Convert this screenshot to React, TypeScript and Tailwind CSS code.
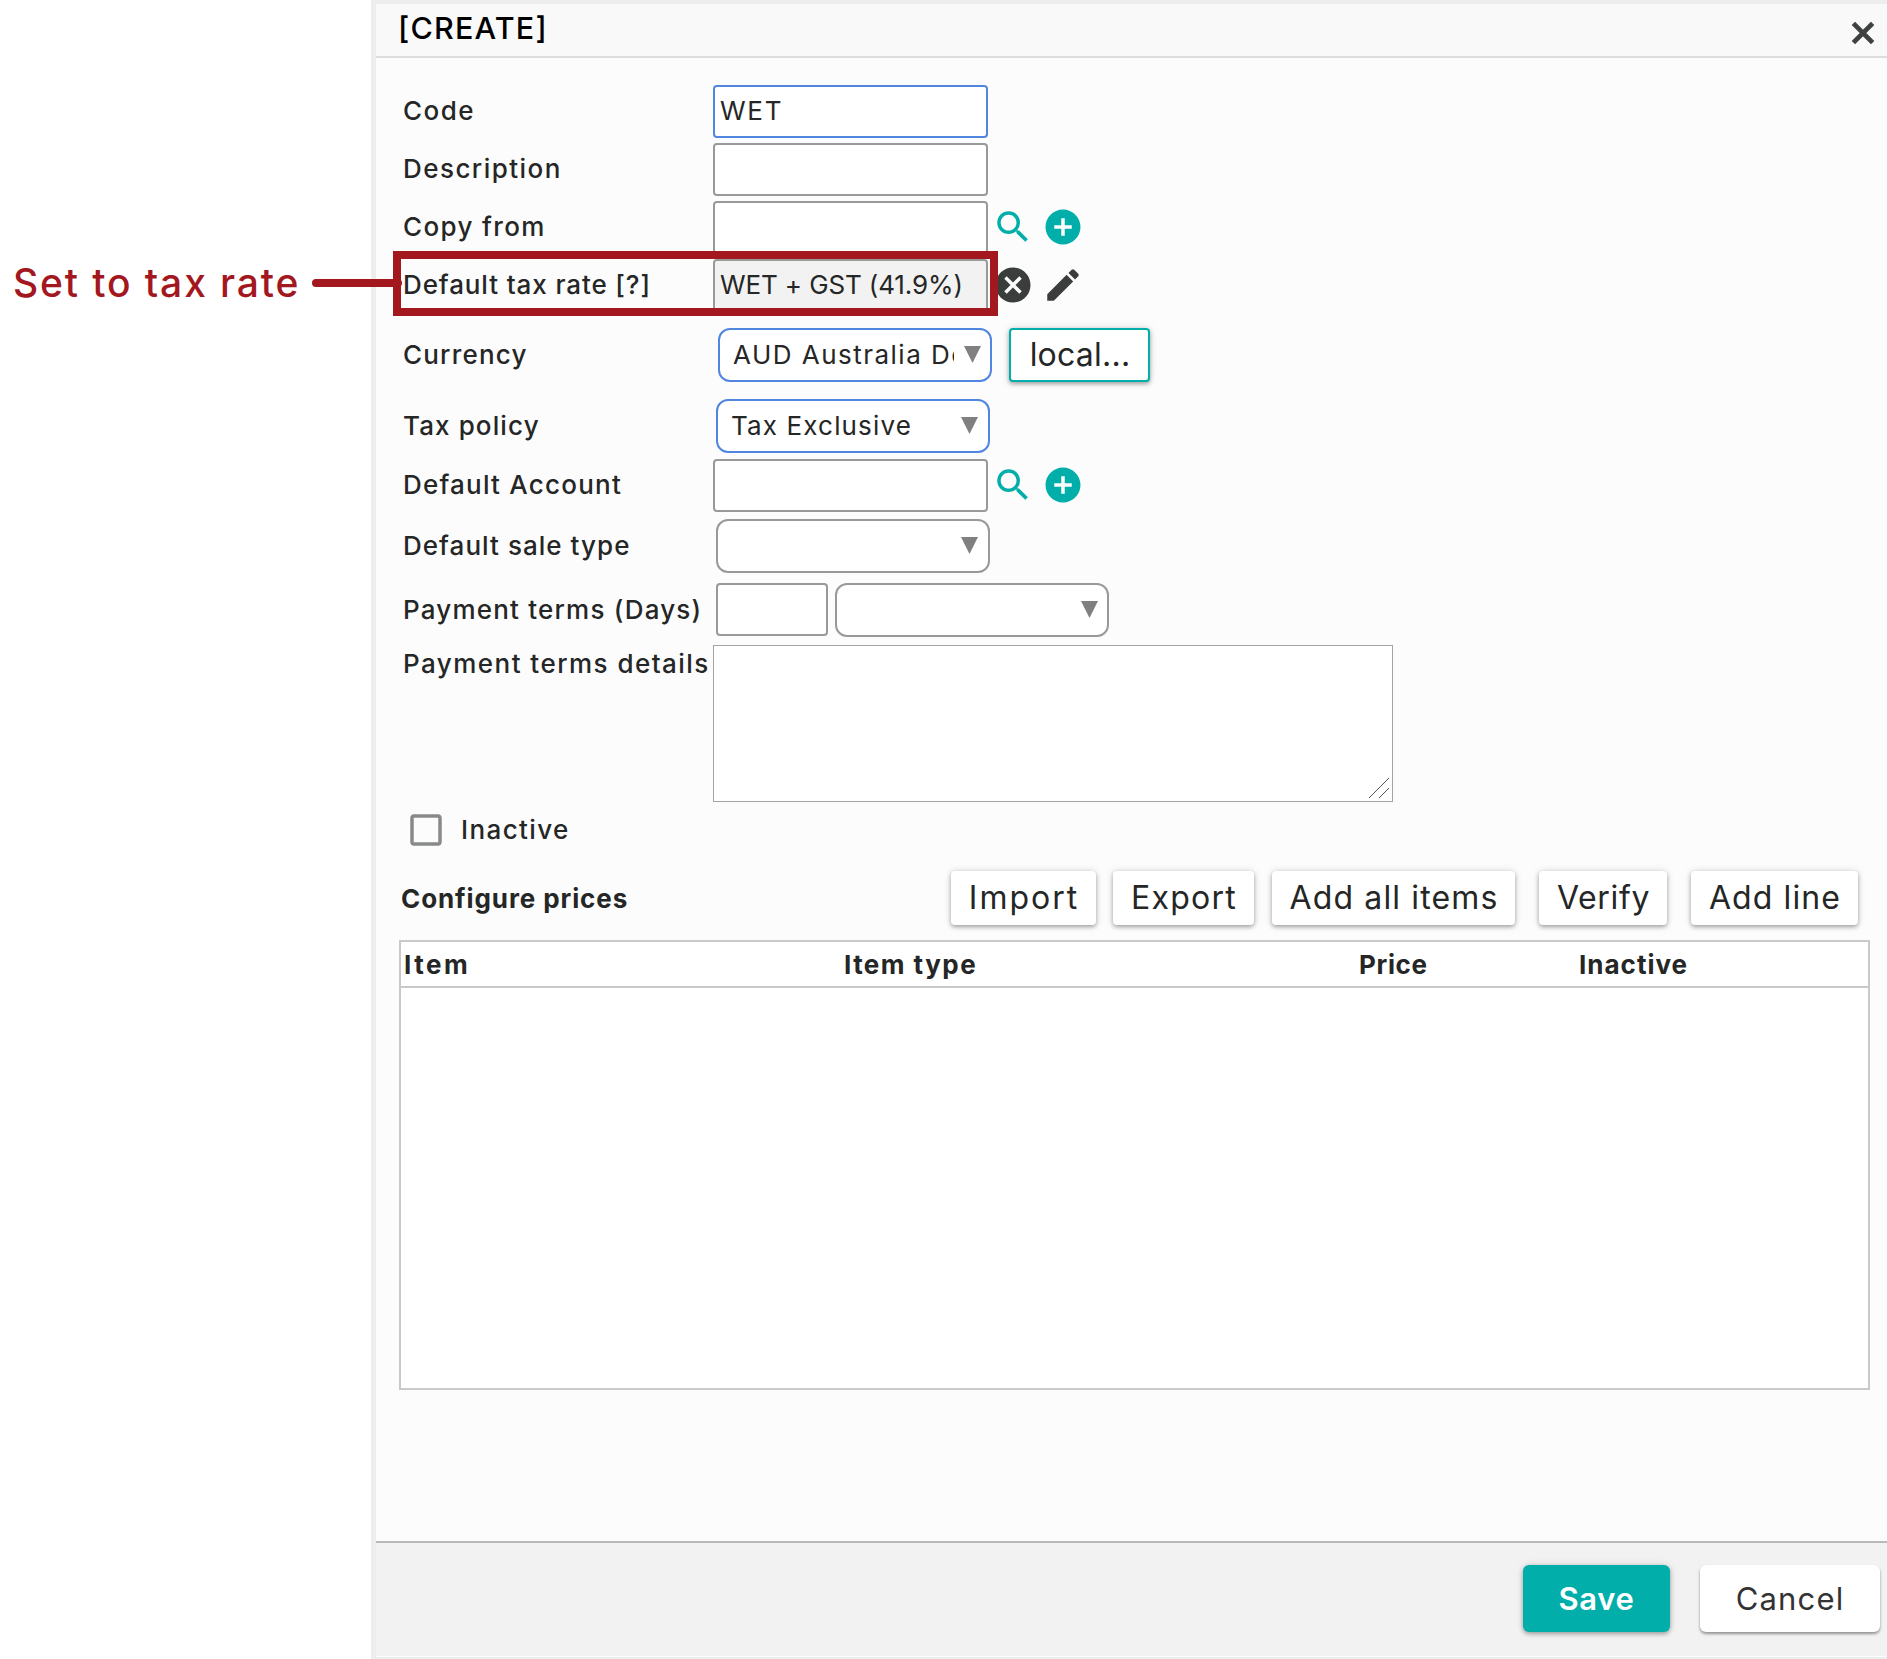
import React from 'react'
import { clsx } from 'clsx'
import { MdAddCircle, MdCancel, MdCheckBoxOutlineBlank, MdEdit, MdSearch } from 'react-icons/md'

interface FieldRowProps {
  label: string
  tracking: string
  className?: string
  labelClassName?: string
  children: React.ReactNode
}

function FieldRow({ label, tracking, className, labelClassName = 'pb-px', children }: FieldRowProps) {
  return (
    <div className={clsx('relative flex items-center', className)}>
      <label
        className={clsx('w-[311px] shrink-0 pl-px whitespace-nowrap font-medium leading-8', tracking, labelClassName)}
      >
        {label}
      </label>
      {children}
    </div>
  )
}

interface TextFieldProps {
  value?: string
  className?: string
}

function TextField({ value = '', className = 'w-[275px] bg-white border-[#999]' }: TextFieldProps) {
  return (
    <input
      readOnly
      value={value}
      className={clsx('h-[53px] shrink-0 rounded border-2 pb-0.5 pl-[5px] outline-none', className)}
    />
  )
}

interface SelectFieldProps {
  value?: string
  required?: boolean
  className?: string
}

function SelectField({ value, required = false, className = 'pr-[10px]' }: SelectFieldProps) {
  return (
    <div
      className={clsx(
        'flex h-[54px] w-[274px] shrink-0 items-center justify-between rounded-xl border-2 bg-white pl-[13px]',
        required ? 'border-[#5186e0]' : 'border-[#999]',
        className
      )}
    >
      <span className="w-[221px] overflow-hidden whitespace-nowrap leading-9">{value}</span>
      <svg width="17" height="17" viewBox="0 0 17 17" className="-mt-px">
        <path d="M0 0h17L8.5 17z" fill="#808080" />
      </svg>
    </div>
  )
}

function LookupIcons() {
  return (
    <div className="mb-px ml-1 flex gap-2 text-[#02aea9]">
      <MdSearch size={42} />
      <MdAddCircle size={42} />
    </div>
  )
}

interface ActionButtonProps {
  className?: string
  children: React.ReactNode
}

function ActionButton({ className, children }: ActionButtonProps) {
  return (
    <button
      className={clsx(
        'h-[54px] shrink-0 rounded pl-px text-[32px] whitespace-nowrap bg-white shadow-[0_2px_4px_rgba(0,0,0,0.32),0_0_8px_rgba(0,0,0,0.12)]',
        className
      )}
    >
      {children}
    </button>
  )
}

function Callout() {
  return (
    <aside className="relative z-10 w-[371px] shrink-0 pt-[263px]">
      <div className="flex h-10 items-center pl-[13px] text-[#a3171e]">
        <span className="w-[299px] shrink-0 text-[39px] font-medium tracking-[1.88px] whitespace-nowrap">
          Set to tax rate
        </span>
        <span className="h-2 w-[90px] shrink-0 rounded-full bg-[#a3171e]" />
      </div>
    </aside>
  )
}

function PriceTable() {
  return (
    <div className="mt-[15px] ml-[23px] flex h-[450px] w-[1471px] flex-col border-2 border-[#c9c9c9] bg-white">
      <div className="flex h-[46px] items-center border-b-2 border-[#c9c9c9] pt-px pl-[3px] font-bold">
        <div className="w-[440px] tracking-[2.5px]">Item</div>
        <div className="w-[515px] tracking-[1.46px]">Item type</div>
        <div className="w-[220px] tracking-[0.65px]">Price</div>
        <div className="tracking-[1px]">Inactive</div>
      </div>
    </div>
  )
}

export default function App() {
  return (
    <div className="flex h-[1659px] w-[1887px] overflow-hidden bg-white font-['Inter','Liberation_Sans',sans-serif] text-[26px] text-[#252626]">
      <Callout />

      <section className="flex w-[1516px] flex-col border-t-4 border-l-[5px] border-[#ededed] bg-[#fcfcfc]">
        <header className="flex h-[54px] items-center justify-between border-b-2 border-[#ddd] bg-[#f9f9f9] pl-[22px]">
          <h1 className="pb-1 text-[30.5px] font-medium tracking-[1.2px] text-black">[CREATE]</h1>
          <svg width="24" height="24" viewBox="0 0 24 24" className="mt-[6px] mr-[12px]">
            <path d="M2.4 2.4l19.2 19.2M21.6 2.4L2.4 21.6" stroke="#3f4141" strokeWidth="4.8" />
          </svg>
        </header>

        <div className="flex flex-1 flex-col">
          <div className="flex flex-col pt-[27px] pl-[26px]">
            <FieldRow label="Code" tracking="tracking-[1.43px]">
              <TextField value="WET" className="w-[275px] border-[#5186e0] bg-white tracking-[1.7px]" />
            </FieldRow>
            <FieldRow label="Description" tracking="tracking-[1.45px]" className="mt-[5px]">
              <TextField />
            </FieldRow>
            <FieldRow label="Copy from" tracking="tracking-[1.36px]" className="mt-[5px]">
              <TextField />
              <LookupIcons />
            </FieldRow>
            <FieldRow label="Default tax rate [?]" tracking="tracking-[0.89px]" className="mt-[5px]">
              <TextField value="WET + GST (41.9%)" className="w-[275px] border-[#999] bg-[#f2f2f2] tracking-[-0.12px]" />
              <div className="mb-px ml-1 flex gap-2 text-[#3b3d3d]">
                <MdCancel size={42} />
                <MdEdit size={42} />
              </div>
              <div className="absolute -top-2 -left-[9px] h-[65px] w-[605px] border-8 border-[#a3171e]" />
            </FieldRow>
            <FieldRow label="Currency" tracking="tracking-[1.2px]" className="mt-4">
              <SelectField value="AUD Australia Dollar" required className="ml-[5px] pr-[9px] tracking-[1.48px]" />
              <ActionButton className="ml-[17px] w-[141px] border-2 border-[#02aea9] tracking-[0.23px]">
                local...
              </ActionButton>
            </FieldRow>
            <FieldRow label="Tax policy" tracking="tracking-[1.11px]" className="mt-[17px]">
              <SelectField value="Tax Exclusive" required className="ml-[3px] pr-[10px] tracking-[1.15px]" />
            </FieldRow>
            <FieldRow label="Default Account" tracking="tracking-[1.22px]" className="mt-1.5">
              <TextField />
              <LookupIcons />
            </FieldRow>
            <FieldRow label="Default sale type" tracking="tracking-[1.04px]" className="mt-[7px]">
              <SelectField className="ml-[3px] pr-[10px]" />
            </FieldRow>
            <FieldRow label="Payment terms (Days)" tracking="tracking-[1.2px]" className="mt-2.5">
              <TextField className="mb-px ml-[3px] w-[112px] border-[#999] bg-white" />
              <SelectField className="ml-[7px] pr-[9px]" />
            </FieldRow>
            <FieldRow
              label="Payment terms details"
              tracking="tracking-[1.46px]"
              className="mt-2"
              labelClassName="mt-[3px] self-start"
            >
              <div className="flex h-[157px] w-[680px] items-end justify-end border border-[#a3a3a3] bg-white p-[3px]">
                <svg width="20" height="20" viewBox="0 0 20 20" stroke="#555" strokeWidth="1">
                  <path d="M0 20L20 0M10 20L20 10" />
                </svg>
              </div>
            </FieldRow>
          </div>

          <div className="mt-1.5 flex items-center pt-px pl-[29px]">
            <MdCheckBoxOutlineBlank size={42} color="#888a8a" />
            <span className="ml-[14px] pb-px font-medium tracking-[1.39px]">Inactive</span>
          </div>

          <div className="mt-5 flex h-[54px] items-center pr-[29px] pl-[25px]">
            <h2 className="mr-auto pt-px font-bold tracking-[0.9px]">Configure prices</h2>
            <ActionButton className="w-[145px] tracking-[2px]">Import</ActionButton>
            <ActionButton className="ml-[17px] w-[141px] tracking-[1.28px]">Export</ActionButton>
            <ActionButton className="ml-[18px] w-[243px] tracking-[1.14px]">Add all items</ActionButton>
            <ActionButton className="ml-6 w-[128px] tracking-[0.64px]">Verify</ActionButton>
            <ActionButton className="ml-6 w-[167px] tracking-[1.11px]">Add line</ActionButton>
          </div>

          <PriceTable />
        </div>

        <footer className="flex h-[115px] items-start justify-end border-t-2 border-[#b9b9b9] bg-[#f2f2f2] pt-[22px] pr-[7px]">
          <button className="h-[67px] w-[147px] rounded-md bg-[#02aea9] pt-0.5 text-[31px] font-semibold tracking-[0.64px] text-white shadow-[0_2px_4px_rgba(0,0,0,0.3),0_0_8px_rgba(0,0,0,0.12)]">
            Save
          </button>
          <button className="ml-[30px] h-[67px] w-[180px] rounded-md bg-white pt-0.5 text-[31px] tracking-[1.17px] text-[#333] shadow-[0_2px_3px_rgba(0,0,0,0.4)]">
            Cancel
          </button>
        </footer>
        <div className="h-[3px] border-t border-white bg-[#ededed]" />
      </section>
    </div>
  )
}
